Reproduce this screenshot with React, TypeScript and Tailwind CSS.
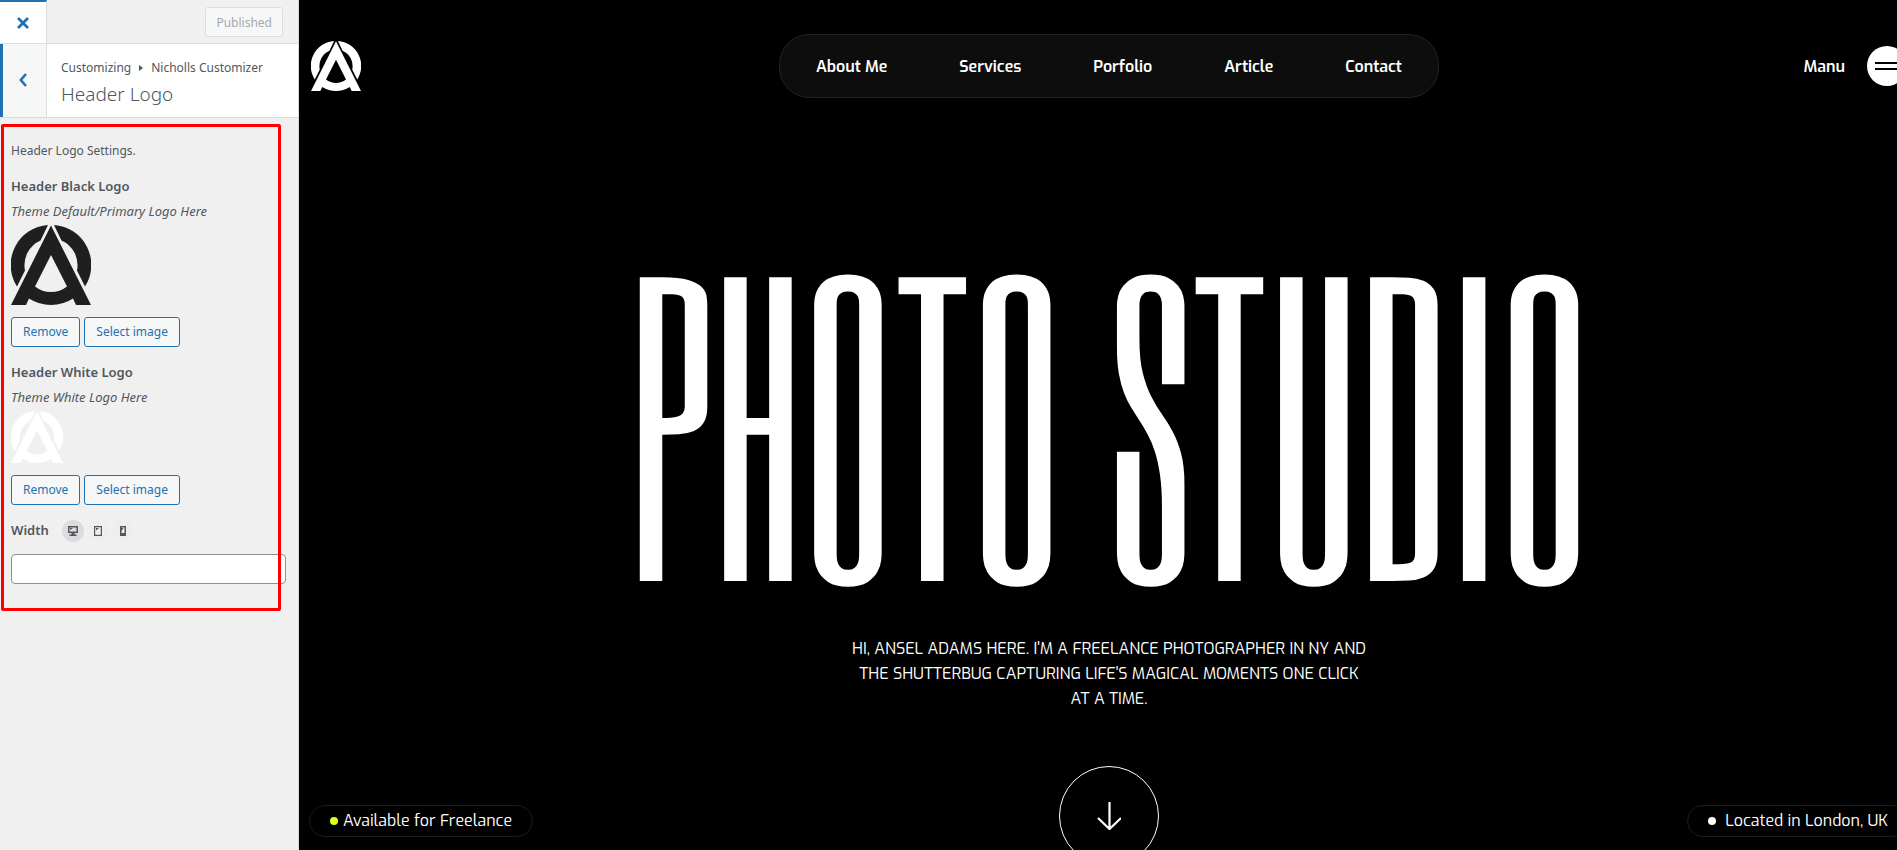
import { useState } from 'react'
import type { ReactNode } from 'react'

const NAV_LINKS = ['About Me', 'Services', 'Porfolio', 'Article', 'Contact']

function Logo({ className }: { className: string }) {
  return (
    <svg viewBox="0 0 80 80" fill="currentColor" className={className} aria-hidden="true">
      <path d="M37 0A40 40 0 0 0 6 61.500L14 45.500A27 27 0 0 1 29.500 15.500Z" />
      <path d="M43 0A40 40 0 0 1 74 61.500L66 45.500A27 27 0 0 0 50.500 15.500Z" />
      <path
        fillRule="evenodd"
        d="M40 0.500L80 80H65L62 73.500Q52 80 40 80Q28 80 18 73.500L15 80H0ZM40 30L24 61.500Q31 67 40 67Q49 67 56 61.500Z"
      />
    </svg>
  )
}

function OutlineButton({ children }: { children: ReactNode }) {
  return (
    <button
      type="button"
      className="h-[30px] rounded-[3px] border border-[#2271b1] bg-[#f6f7f7] px-[11px] text-[12px] text-[#2271b1]"
    >
      {children}
    </button>
  )
}

function ImageControl({ title, hint, children }: { title: string; hint: string; children: ReactNode }) {
  return (
    <section className="mb-[15px]">
      <h3 className="text-[13px] leading-5 font-semibold">{title}</h3>
      <p className="mt-[5px] mb-1 text-[13px] leading-5 italic">{hint}</p>
      {children}
      <div className="mt-3 flex gap-1">
        <OutlineButton>Remove</OutlineButton>
        <OutlineButton>Select image</OutlineButton>
      </div>
    </section>
  )
}

const DEVICES = [
  {
    name: 'Desktop',
    icon: <path fillRule="evenodd" d="M1 1h10v7H7.500v1.500h2V11h-7V9.500h2V8H1zM2.500 2.500v4h7v-4zM3 3h3L3 5z" />,
  },
  {
    name: 'Tablet',
    icon: <path fillRule="evenodd" d="M2 1h8v10H2zM3.200 2.200v7.600h5.600V2.200zM4 3h3L4 5.500z" />,
  },
  {
    name: 'Mobile',
    icon: <path fillRule="evenodd" d="M3 1h6v10H3zM4.500 2.500v5.500h3v-5.500zM4.500 3h2l-2 3z" />,
  },
]

function Sidebar() {
  const [device, setDevice] = useState('Desktop')
  const [width, setWidth] = useState('')

  return (
    <aside className="w-[299px] shrink-0 border-r border-[#dcdcde] bg-[#f0f0f1] font-['Noto_Sans',sans-serif] text-[#50575e]">
      <div className="flex h-11 items-center justify-between border-b border-[#dcdcde] pr-[15px]">
        <button
          type="button"
          aria-label="Close"
          className="flex h-full w-[47px] items-center justify-center border-t-2 border-r border-t-[#2271b1] border-r-[#dcdcde] bg-white text-[#2271b1]"
        >
          <svg viewBox="0 0 12 12" className="size-3" stroke="currentColor" strokeWidth="2.800">
            <path d="M1 1L11 11M11 1L1 11" />
          </svg>
        </button>
        <button
          type="button"
          disabled
          className="mt-px h-[30px] rounded-[3px] border border-[#dcdcde] bg-[#f6f7f7] px-2.5 pt-0.5 text-[12px] text-[#a7aaad]"
        >
          Published
        </button>
      </div>

      <div className="flex h-[74px] border-b border-[#dcdcde] bg-white">
        <button
          type="button"
          aria-label="Back"
          className="flex w-[47px] items-center justify-center border-r border-l-3 border-r-[#dcdcde] border-l-[#2271b1] bg-[#f6f7f7] pr-1 pb-0.5 text-[#2271b1]"
        >
          <svg viewBox="0 0 8 14" className="h-3.5 w-2" fill="none" stroke="currentColor" strokeWidth="2.600">
            <path d="M7 1L1.800 7L7 13" />
          </svg>
        </button>
        <div className="pt-3.5 pl-3.5">
          <p className="flex items-center text-[12px] leading-5">
            Customizing
            <svg viewBox="0 0 4 6" className="mx-2 h-1.5 w-1" fill="currentColor">
              <path d="M0 0L4 3L0 6Z" />
            </svg>
            Nicholls Customizer
          </p>
          <h2 className="mt-1 text-[19px] leading-6 font-light">Header Logo</h2>
        </div>
      </div>

      <div className="relative pt-[23px] pr-3 pl-[11px]">
        <p className="mb-[15px] text-[12px] leading-5">Header Logo Settings.</p>

        <ImageControl title="Header Black Logo" hint="Theme Default/Primary Logo Here">
          <Logo className="size-20 text-[#1d1f20]" />
        </ImageControl>
        <ImageControl title="Header White Logo" hint="Theme White Logo Here">
          <Logo className="size-[52px] text-white" />
        </ImageControl>

        <div className="flex items-center">
          <label htmlFor="logo-width" className="mr-[13px] pb-0.5 text-[13px] leading-5 font-semibold">
            Width
          </label>
          <div className="flex gap-[3px]">
            {DEVICES.map((d) => (
              <button
                key={d.name}
                type="button"
                aria-label={d.name}
                onClick={() => setDevice(d.name)}
                className={`flex size-[22px] items-center justify-center rounded-full ${d.name === device ? 'bg-[#dcdcde]' : 'bg-[#eeeeee]'}`}
              >
                <svg viewBox="0 0 12 12" className="size-3" fill="currentColor">
                  {d.icon}
                </svg>
              </button>
            ))}
          </div>
        </div>
        <input
          id="logo-width"
          type="text"
          value={width}
          onChange={(e) => setWidth(e.target.value)}
          className="mt-3 block h-[30px] w-full rounded-[4px] border border-[#8c8f94] bg-white px-2 text-[13px]"
        />

        {/* highlight around the settings group */}
        <div className="pointer-events-none absolute top-1.5 right-[17px] -bottom-[27px] left-px rounded-[2px] border-3 border-[#ff0000]" />
      </div>
    </aside>
  )
}

function Preview() {
  return (
    <main className="min-w-0 flex-1 overflow-hidden bg-black font-['Exo','Exo_2','Noto_Sans',sans-serif] text-white">
      {/* the previewed page is a little wider than its frame */}
      <div className="relative flex h-full w-[calc(100%+22px)] flex-col">
        <header className="grid grid-cols-[1fr_auto_1fr] items-center px-3 pt-[34px]">
          <a href="#home" aria-label="Home" className="w-fit">
            <Logo className="size-[50px]" />
          </a>
          <nav className="flex h-16 w-[660px] items-center justify-between rounded-[30px] border border-[#222222] bg-[#0d0d0d] px-9 pt-0.5 text-[16px] font-semibold">
            {NAV_LINKS.map((link) => (
              <a key={link} href="#">
                {link}
              </a>
            ))}
          </nav>
          <div className="flex items-center justify-end gap-[22px]">
            <span className="pt-0.5 text-[16px] font-semibold">Manu</span>
            <button
              type="button"
              aria-label="Open menu"
              className="flex size-10 flex-col items-center justify-center gap-1 rounded-full bg-white"
            >
              <span className="h-0.5 w-6 bg-black" />
              <span className="h-0.5 w-6 bg-black" />
            </button>
          </div>
        </header>

        <section className="flex flex-col items-center pt-[162px]">
          <h1 className="font-['Six_Caps','League_Gothic','Liberation_Sans_Narrow',sans-serif] text-[360px] leading-[320px] font-normal whitespace-nowrap">
            <span className="mr-2">PHOTO</span> STUDIO
          </h1>
          <p className="mt-14 w-[516px] text-center text-[16px] leading-[25px]">
            HI, ANSEL ADAMS HERE. I'M A FREELANCE PHOTOGRAPHER IN NY AND THE SHUTTERBUG CAPTURING LIFE'S MAGICAL
            MOMENTS ONE CLICK AT A TIME.
          </p>
          <a
            href="#work"
            aria-label="Scroll down"
            className="mt-[55px] flex size-[100px] items-center justify-center rounded-full border border-white"
          >
            <svg viewBox="0 0 24 28" className="h-7 w-6" fill="none" stroke="currentColor" strokeWidth="2.200">
              <path d="M12.500 0V26M1 16L12.500 27L24 16" />
            </svg>
          </a>
        </section>

        <div className="absolute inset-x-2.5 bottom-[13px] flex justify-between text-[16px]">
          <div className="flex h-8 items-center gap-[5px] rounded-full border border-[#1c1c1c] px-5">
            <span className="size-2 rounded-full bg-[#e4ff1a]" />
            Available for Freelance
          </div>
          <div className="flex h-8 items-center gap-[9px] rounded-full border border-[#1c1c1c] px-5">
            <span className="size-2 rounded-full bg-white" />
            Located in London, UK
          </div>
        </div>
      </div>
    </main>
  )
}

export default function App() {
  return (
    <div className="flex h-screen overflow-hidden">
      <Sidebar />
      <Preview />
    </div>
  )
}
